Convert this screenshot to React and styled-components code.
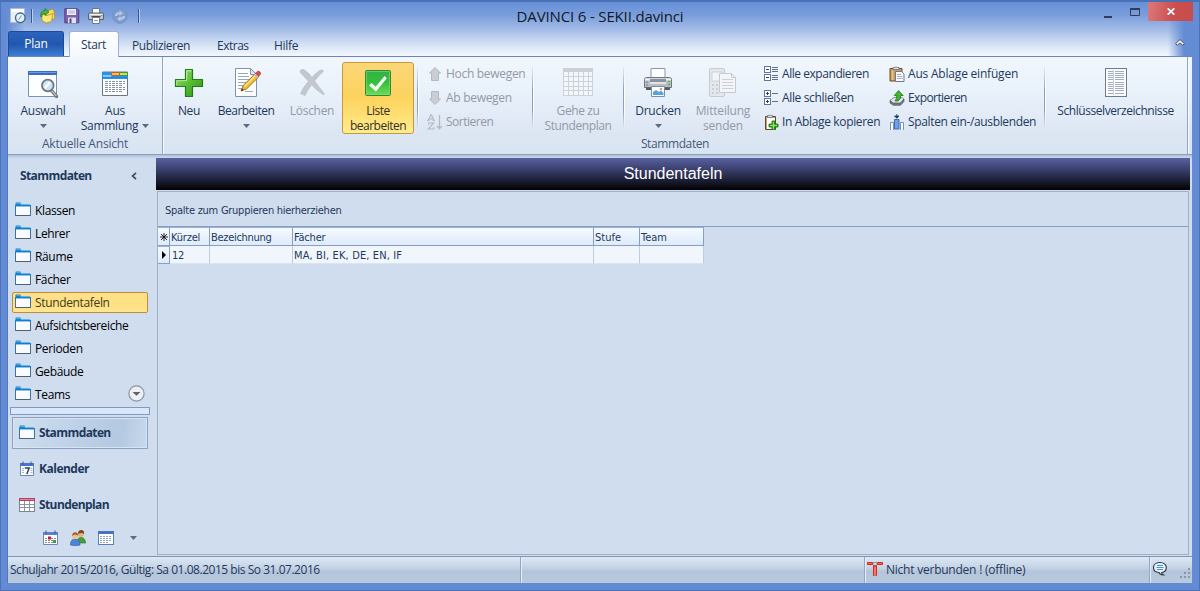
import React from "react";
import styled, { createGlobalStyle } from "styled-components";

const ui = `"Open Sans", "Noto Sans", sans-serif`;
const grid = `"DejaVu Sans Condensed", "DejaVu Sans", sans-serif`;

const Global = createGlobalStyle`
  *, *::before, *::after { box-sizing: border-box; }
  html, body { margin: 0; height: 100%; overflow: hidden; }
  body { font: 12px/15px ${ui}; color: #1e395b; cursor: default; }
  svg { display: block; flex: none; }
`;

const T = styled.span`
  white-space: nowrap;
  letter-spacing: ${(p) => p.$ls ?? -0.3}px;
`;

const Window = styled.div`
  width: 1200px;
  height: 591px;
  display: flex;
  flex-direction: column;
  border: 1px solid #4c73b8;
  border-top: 2px solid #4870b4;
  background: #628bd4;
`;

const Chrome = styled.header`
  height: 54px;
  flex: none;
  display: flex;
  flex-direction: column;
  background:
    linear-gradient(90deg, #648cd5 5px, rgba(100, 140, 213, 0) 24px, rgba(100, 140, 213, 0) 1167px, #648cd5 1183px),
    linear-gradient(#6790d8 0, #7c9fdc 14px, #a5bde8 28px, #d3e0f4 42px, #f4f8fd 54px);
`;

const TitleRow = styled.div`
  display: grid;
  grid-template-columns: 420px 1fr 420px;
  height: 29px;
`;

const QuickBar = styled.div`
  display: flex;
  align-items: center;
  padding: 0 0 1px 9px;
`;

const QuickIcon = styled.div`
  width: 16px;
  height: 16px;
  margin-right: ${(p) => p.$gap ?? 8}px;
`;

const QuickSep = styled.i`
  width: 2px;
  height: 14px;
  margin-right: ${(p) => p.$gap}px;
  background: linear-gradient(90deg, #3c5889 50%, #b9cdf0 50%);
`;

const WindowTitle = styled.div`
  text-align: center;
  padding-top: 4px;
  font-size: 15px;
  line-height: 20px;
  color: #111827;
`;

const Controls = styled.div`
  display: flex;
  justify-content: flex-end;
  align-items: flex-start;
  padding-right: 6px;
`;

const Control = styled.div`
  width: ${(p) => p.$w}px;
  height: 19px;
  display: flex;
  align-items: center;
  justify-content: center;
  background: ${(p) => (p.$close ? "linear-gradient(100deg, #db7a7c, #cc4f50 55%, #c94c4c)" : "none")};
`;

const TabRow = styled.nav`
  display: flex;
  height: 25px;
  padding-left: 7px;
`;

const PlanTab = styled.div`
  width: 56px;
  height: 25px;
  border: 1px solid #1c4a9b;
  border-bottom: 0;
  border-radius: 3px 3px 0 0;
  background: linear-gradient(#2d63bd, #2257ae 50%, #3b7ed4);
  color: #fff;
  text-align: center;
  line-height: 24px;
`;

const StartTab = styled.div`
  width: 50px;
  height: 26px;
  margin: 0 13px 0 5px;
  padding-right: 1px;
  position: relative;
  z-index: 1;
  border: 1px solid #9eb3d3;
  border-bottom: 0;
  border-radius: 3px 3px 0 0;
  background: linear-gradient(#ffffff, #f3f8fd);
  text-align: center;
  line-height: 26px;
`;

const Tab = styled.div`
  width: ${(p) => p.$w}px;
  line-height: 29px;
`;

const Collapse = styled.div`
  margin-left: auto;
  width: 24px;
  padding-top: 8px;
`;

const Client = styled.div`
  flex: 1;
  min-height: 0;
  display: flex;
  flex-direction: column;
  margin: 0 7px 7px 6px;
  border-left: 1px solid #4f78c0;
  border-right: 0;
  background: #cfddee;
`;

const Ribbon = styled.section`
  height: 99px;
  flex: none;
  display: flex;
  border-top: 1px solid #6b87b3;
  border-bottom: 1px solid #8a9fbc;
  background: linear-gradient(#f2f7fd, #e9f1fa 35%, #dce6f3 80%, #d9e4f2);
`;

const Group = styled.div`
  width: ${(p) => p.$w}px;
  padding-top: 5px;
  border-right: 1px solid #92a6c3;
  box-shadow: 1px 0 #f6faff;
`;

const GroupBody = styled.div`
  display: flex;
  height: 72px;
  > * { flex: none; }
`;

const Caption = styled.div`
  padding-top: 2px;
  text-align: center;
  color: #45597a;
  line-height: 16px;
`;

const Big = styled.div`
  width: ${(p) => p.$w}px;
  height: 72px;
  margin-left: ${(p) => p.$ml ?? 0}px;
  padding-top: ${(p) => (p.$on ? 4 : 5)}px;
  display: flex;
  flex-direction: column;
  align-items: center;
  text-align: center;
  color: ${(p) => (p.$off ? "#939aa6" : p.$on ? "#33311f" : "#1e395b")};
  ${(p) => p.$on && `
    border: 1px solid #c59a3c;
    border-radius: 3px;
    background: linear-gradient(#fbd678, #fdd35d 50%, #ffe27a 80%, #ffec92);
  `}
  > svg { margin-bottom: 4px; }
`;

const Line = styled.div`
  display: flex;
  justify-content: center;
  align-items: center;
  gap: 4px;
  height: 15px;
`;

const Sep = styled.i`
  width: 2px;
  height: 64px;
  margin: 3px -1px 0 ${(p) => p.$ml ?? 0}px;
  background: linear-gradient(90deg, rgba(140, 160, 190, 1) 50%, #fff 50%);
  mask-image: linear-gradient(transparent, #000 40%, #000 70%, transparent);
`;

const SmallCol = styled.div`
  width: ${(p) => p.$w}px;
  padding-left: ${(p) => p.$pl ?? 0}px;
`;

const Small = styled.div`
  height: 24px;
  display: flex;
  align-items: center;
  gap: 3px;
  color: ${(p) => (p.$off ? "#939aa6" : "#1e395b")};
  > span { padding-bottom: 2px; }
`;

const Main = styled.div`
  flex: 1;
  min-height: 0;
  display: flex;
  padding: 3px 2px 0 0;
  background: linear-gradient(#afc0d7 0, #c9d8eb 3px, #cfddee 4px);
`;

const Sidebar = styled.aside`
  width: 148px;
  display: flex;
  flex-direction: column;
`;

const SideHead = styled.div`
  height: 42px;
  padding: 0 19px 7px 12px;
  display: flex;
  align-items: center;
  justify-content: space-between;
  font-weight: 700;
  color: #1e395b;
`;

const SideItem = styled.div`
  height: 21px;
  margin: 0 8px 2px 4px;
  padding: 0 2px;
  display: flex;
  align-items: center;
  gap: 4px;
  border: 1px solid ${(p) => (p.$on ? "#c48a3a" : "transparent")};
  border-radius: 2px;
  background: ${(p) => (p.$on ? "linear-gradient(#fde08b, #ffe183 60%, #ffe68f)" : "none")};
  color: ${(p) => (p.$on ? "#3e3a20" : "#000")};
  > svg:first-child { margin-top: -1px; }
  > svg:last-child:not(:first-child) { margin: -3px 0 0 auto; }
`;

const Splitter = styled.div`
  height: 8px;
  margin: 0 6px 2px 2px;
  border: 1px solid #8199bd;
  background: #d9e7fa;
`;

const Nav = styled.div`
  height: 32px;
  margin: 0 8px 4px 4px;
  padding-left: 6px;
  display: flex;
  align-items: center;
  gap: 4px;
  font-weight: 700;
  border: 1px solid ${(p) => (p.$on ? "#8ba2c1" : "transparent")};
  background: ${(p) => (p.$on ? "linear-gradient(100deg, #cfdff0, #b9cde4 60%, #b4c9e2 80%, #c9daed)" : "none")};
  box-shadow: ${(p) => (p.$on ? "inset 0 0 0 1px #d6e4f4" : "none")};
  > span { padding-bottom: 1px; }
`;

const NavIcons = styled.div`
  display: flex;
  align-items: center;
  gap: 12px;
  padding: 5px 0 0 34px;
  > svg:last-child { margin-left: 4px; }
`;

const Content = styled.main`
  flex: 1;
  display: flex;
  flex-direction: column;
`;

const Banner = styled.h1`
  margin: 0;
  height: 32px;
  background: linear-gradient(#5961a0, #3f4576 30%, #171a2c 75%, #000);
  color: #fff;
  text-align: center;
  font: 400 16px/32px "Liberation Sans", Arial, sans-serif;
  letter-spacing: 0;
`;

const Panel = styled.div`
  flex: 1;
  margin: 1px 1px 1px;
  border: 1px solid #9eb0ca;
  font: 11px/17px ${grid};
`;

const GroupBy = styled.div`
  height: 35px;
  padding: 1px 0 0 7px;
  line-height: 36px;
  border-bottom: 1px solid #869fc2;
`;

const Table = styled.div`
  display: grid;
  grid-template-columns: 12px 40px 83px 301px 46px 64px;
  grid-template-rows: 19px 18px;
  width: 546px;
`;

const HeadCell = styled.div`
  padding-left: 1px;
  line-height: 19px;
  border-right: 1px solid #869fc2;
  border-bottom: 1px solid #869fc2;
  border-top: 1px solid #9db2cf;
  background: linear-gradient(#f4f9ff, #dfebfa);
`;

const Cell = styled.div`
  padding-left: ${(p) => p.$pl ?? 1}px;
  line-height: 19px;
  border-right: 1px solid #bccde2;
  border-bottom: 1px solid #dbe5f2;
  background: #f1f6fc;
`;

const Mark = styled(HeadCell)`
  display: flex;
  align-items: center;
  justify-content: center;
  padding: 0;
`;

const Status = styled.footer`
  height: 27px;
  flex: none;
  display: flex;
  border-top: 1px solid #8095b4;
  background: linear-gradient(#dce8f5, #c3d1e3 45%, #b4c4da 55%, #b9c9de);
`;

const StatusCell = styled.div`
  width: ${(p) => p.$w}px;
  display: flex;
  align-items: center;
  gap: 3px;
  padding-left: 2px;
  border-right: ${(p) => (p.$last ? "0" : "1px solid #93a7c3")};
  box-shadow: ${(p) => (p.$last ? "none" : "1px 0 #e4edf8")};
  justify-content: ${(p) => (p.$last ? "space-between" : "flex-start")};
  > span { padding-bottom: 2px; }
  > svg { margin-bottom: 2px; }
  > svg:nth-child(2) { margin: 8px 0 0; }
`;

const Down = ({ c = "#5b6b80" }) => (
  <svg width="7" height="4" viewBox="0 0 7 4"><path d="M0 0h7L3.500 4z" fill={c} /></svg>
);

const Folder = () => (
  <svg width="16" height="16" viewBox="0 0 16 16">
    <path d="M.5 2.500V1q0-.6.7-.6h4l1.200 1.800H15v1.600H.5z" fill="#1583cf" />
    <path d="M1.500 1.400h3.600l.8 1.100H15" fill="none" stroke="#6fc5f5" strokeWidth=".7" />
    <path d="M.5 3.800h15v9.700H.5z" fill="#f8fbff" stroke="#3a73a5" />
    <path d="M0 3h16v1.200H0z" fill="#0e7fd2" />
    <path d="M.3 13.500h15.400" stroke="#4e5f76" />
  </svg>
);

const WindowFind = () => (
  <svg width="32" height="32" viewBox="0 0 32 32">
    <path d="M1.500 4.500h28v25h-28z" fill="#fdfeff" stroke="#7c92b5" />
    <path d="M1 4h29v4H1z" fill="#3a6cc4" /><path d="M2 5h27v1H2z" fill="#6f9ae0" />
    <path d="M24.500 23.500l5 6" stroke="#6d7178" strokeWidth="3.400" strokeLinecap="round" />
    <path d="M24.700 23.700l4.600 5.400" stroke="#c3c6cc" strokeWidth="1.300" />
    <circle cx="20.800" cy="18.500" r="5.800" fill="#cfe3f6" stroke="#6d7580" strokeWidth="1.800" />
    <path d="M18 21l5-6" stroke="#fff" strokeWidth="2" />
  </svg>
);

const Collection = () => (
  <svg width="32" height="32" viewBox="0 0 32 32">
    <path d="M3.500 5h25v23.500h-25z" fill="#fff" stroke="#667890" />
    <path d="M3 7q0-2 2-2h7v4h17v3H3z" fill="#2b92ea" /><path d="M4 8h8v3H4z" fill="#7cc9ff" />
    <path d="M12.500 5.500h8v3h-8z" fill="#ffb765" stroke="#c0601f" />
    <path d="M20.500 5.500h8v3h-8z" fill="#b8e67c" stroke="#57912d" />
    <path d="M3 10.500h26" stroke="#2b84d5" />
    <g stroke="#8893a5" strokeDasharray="3 1 2 1"><path d="M6 14.500h20M6 16.500h20M6 18.500h18M6 20.500h20M6 22.500h20M6 24.500h17" /></g>
  </svg>
);

const Plus = () => (
  <svg width="32" height="32" viewBox="0 0 32 32">
    <defs><linearGradient id="pg" x1="0" y1="0" x2="1" y2="1"><stop offset="0" stopColor="#9be36d" /><stop offset=".5" stopColor="#58bd34" /><stop offset="1" stopColor="#2d9317" /></linearGradient></defs>
    <path d="M12.500 2.500h7v10h10v7h-10v10h-7v-10h-10v-7h10z" fill="url(#pg)" stroke="#257c16" strokeWidth="1.200" strokeLinejoin="round" />
    <path d="M13.700 13.700V3.800h4.600" fill="none" stroke="#c6f0ab" />
    <path d="M3.700 18v-4.300h10" fill="none" stroke="#b2e895" />
  </svg>
);

const EditDoc = () => (
  <svg width="32" height="32" viewBox="0 0 32 32">
    <path d="M5.500 1.500h15l6 6v22h-21z" fill="#fdfeff" stroke="#8192ae" />
    <path d="M20.500 1.500v6h6z" fill="#dbe5f3" stroke="#8192ae" />
    <g stroke="#9aa6ba"><path d="M8 6.500h10M8 9.500h11M8 12.500h12M8 15.500h11M8 18.500h7M8 21.500h5M15 24.500h8" /></g>
    <path d="M11 24l2.200-5.500L25.500 6.300l3.400 3.400L16.500 22z" fill="#f2bd35" stroke="#946a18" strokeWidth=".9" />
    <path d="M14.500 19.500l12-12" stroke="#ffe58c" strokeWidth="1.300" />
    <path d="M25.200 6.600l2-2q1.300-1 2.600.2t.5 2.600l-1.900 1.900z" fill="#e14b43" stroke="#95322c" strokeWidth=".6" />
    <path d="M24 7.800l1.300-1.300 3.200 3.200-1.300 1.300z" fill="#b7c1cf" />
    <path d="M11 24l1-2.600 1.700 1.700z" fill="#303030" />
  </svg>
);

const Cross = () => (
  <svg width="32" height="32" viewBox="0 0 32 32" fill="#c3c8cf" stroke="#b9bec7" strokeWidth=".8" strokeLinejoin="round">
    <path d="M4 5q0-2.500 2.800-2.500Q10 3 16 10.500 21 4.500 25.500 2.800l2 1.200Q22 9 18.500 14q4.500 6 9.800 13l-.9.700Q21 23.500 15.500 17.800 11 23.500 9 28.500L4.500 26.500Q7.500 20 12.500 14.300 7.500 9 4 5z" />
  </svg>
);

const Check = () => (
  <svg width="32" height="32" viewBox="0 0 32 32">
    <defs><linearGradient id="cg" x1="0" y1="0" x2="0" y2="1"><stop offset="0" stopColor="#35b045" /><stop offset=".5" stopColor="#35c03c" /><stop offset="1" stopColor="#71da59" /></linearGradient></defs>
    <rect x="3.500" y="3.500" width="25" height="25" rx="1" fill="url(#cg)" stroke="#2f8a34" />
    <path d="M4.500 27.500v-23h23v23z" fill="none" stroke="#7fe07c" strokeOpacity=".6" />
    <path d="M7 18.500l2.600-2.600 4 3.800L22.600 9l2.200 2.300L14 24.500z" fill="#f4fbf4" />
  </svg>
);

const MoveArrow = ({ down }) => (
  <svg width="16" height="16" viewBox="0 0 16 16">
    <path transform={down ? "rotate(180 8 8)" : undefined} d="M8 1.500l5.500 5.500h-2v7.500h-7V7h-2z" fill="#c9cdd4" stroke="#b4b9c2" strokeLinejoin="round" />
  </svg>
);

const Sort = () => (
  <svg width="16" height="16" viewBox="0 0 16 16" fill="none" stroke="#b4bac4">
    <path d="M1 6.500L3.800.8h.6L7 6.500M2 4.800h4M.2 6.500h2.200M5.600 6.500h2.200" strokeWidth="1.200" />
    <path d="M1.500 10.500V9h5L1.300 15h5.600v-1.700" strokeWidth="1.200" />
    <path d="M12.500 1v13.500M10 12l2.500 2.700L15 12" strokeWidth="1.300" />
  </svg>
);

const Timetable = () => (
  <svg width="32" height="32" viewBox="0 0 32 32" shapeRendering="crispEdges">
    <path d="M1.500 1.500h29v27h-29z" fill="#f3f6fa" stroke="#ccd2da" />
    <path d="M1 1h30v4H1z" fill="#cbd0d8" />
    <path d="M6.500 5v23M11.500 5v23M16.500 5v23M21.500 5v23M26.500 5v23M2 9.500h29M2 14.500h29M2 19.500h29M2 23.500h29" stroke="#ccd2da" />
  </svg>
);

const Printer = ({ size = 32 }) => (
  <svg width={size} height={size} viewBox="0 0 32 32">
    <path d="M9 1.500h14V12H9z" fill="#fcfdff" stroke="#8c97a8" />
    <path d="M2.500 12.500q0-2 2-2h23q2 0 2 2v8h-27z" fill="#b9bec6" stroke="#6f7680" />
    <path d="M3 12.500h26" stroke="#eef0f3" strokeWidth="2" />
    <path d="M4 20.500h24v2.500H4z" fill="#555b64" />
    <path d="M8 12h16v4H8z" fill="#8b929d" /><path d="M8 15h16v2H8z" fill="#e1e4e8" />
    <path d="M9.500 19.500h13v10h-13z" fill="#fff" stroke="#7c8da8" />
    <path d="M11 28v-3l3-2 3 2 2-1.500 2.500 2.500v2z" fill="#56a3e0" /><circle cx="19" cy="22" r="1.300" fill="#e7a04a" />
    <path d="M26 14.500h2M26 17.500h2" stroke="#53bb3c" strokeWidth="1.400" />
    <path d="M4 15h2M4 18h2" stroke="#787f8a" />
  </svg>
);

const Message = () => (
  <svg width="32" height="32" viewBox="0 0 32 32">
    <rect x="2.500" y="1.500" width="15" height="28" rx="1.500" fill="#e4e7ec" stroke="#c6cbd2" />
    <path d="M5 5h10v9H5z" fill="#f3f5f8" stroke="#cdd1d8" />
    <g fill="#c9cdd5"><path d="M5 17h2v2H5zM9 17h2v2H9zM5 21h2v2H5zM9 21h2v2H9zM5 25h2v2H5zM9 25h2v2H9z" /></g>
    <path d="M12.500 6.500h12l4 4v15h-16z" fill="#f3f5f9" stroke="#c5cad2" /><path d="M24.500 6.500v4h4" fill="none" stroke="#c5cad2" />
    <path d="M15 12.500h11M15 15.500h11M15 18.500h11M15 21.500h11" stroke="#cbd0d8" />
  </svg>
);

const Expand = ({ open }) => (
  <svg width="16" height="16" viewBox="0 0 16 16" fill="none" shapeRendering="crispEdges">
    <path d="M1.500 .5h6v6h-6zM1.500 8.500h6v6h-6z" fill="#fff" stroke="#66758d" />
    <path d={open ? "M3 3.500h3M3 11.500h3" : "M3 3.500h3M3 11.500h3M4.500 2v3M4.500 10v3"} stroke="#1f3d74" />
    <path d={open ? "M9 1.500h6M9 3.500h6M9 5.500h6M9 9.500h6M9 11.500h6M9 13.500h6" : "M9 3.500h6M9 11.500h6"} stroke="#5f7090" />
  </svg>
);

const ClipCopy = () => (
  <svg width="16" height="16" viewBox="0 0 16 16">
    <path d="M2.500 2.500h10v13h-10z" fill="#fbfdff" stroke="#614a2b" /><path d="M3.500 15V3.500H12" fill="none" stroke="#c8a26a" />
    <path d="M4.500 3.500v-2h1.700q.8-1.200 1.600 0h1.700v2z" fill="#d9dde4" stroke="#6a7280" strokeWidth=".8" />
    <path d="M9 7h3v3h3v3h-3v3H9v-3H6v-3h3z" fill="#3dae26" stroke="#176a10" strokeWidth=".8" />
    <path d="M10.500 8v7M7 11.500h7" stroke="#8ee06c" />
  </svg>
);

const ClipPaste = () => (
  <svg width="16" height="16" viewBox="0 0 16 16">
    <path d="M1 2.500h12v12.500H1z" fill="#c89b55" stroke="#6b4f2b" /><path d="M2.500 4h2v10h-2z" fill="#e3c184" />
    <path d="M4 3.500v-2h2q1-1.400 2 0h2v2z" fill="#dfe3e9" stroke="#6a7280" strokeWidth=".8" />
    <path d="M6.500 5.500h6l2.500 2.500v7.500H6.500z" fill="#f9fbfe" stroke="#707a89" />
    <path d="M8 8.500h4M8 10.500h5.500M8 12.500h5.500" stroke="#a3aebf" />
  </svg>
);

const Export = () => (
  <svg width="16" height="16" viewBox="0 0 16 16">
    <path d="M1 10.500L5 7.500h8l2 1.500-3.500 4.500H4z" fill="#dfe4ea" stroke="#767e8a" strokeWidth=".8" />
    <path d="M1 10.500l3 2.500h7.500L15 9v2.500l-3.500 3.800H4.200L1 13z" fill="#707883" stroke="#474f59" strokeWidth=".6" />
    <path d="M9.500.6l4.700 4.900h-2.400q.2 3.600-2.800 5.500H6q2-2.200 1.800-5.500H5.300z" fill="#46b52e" stroke="#1d7716" strokeWidth=".8" />
  </svg>
);

const Columns = () => (
  <svg width="16" height="16" viewBox="0 0 16 16">
    <path d="M1.500 16V8.500h3V16M11.500 16V8.500h3V16" fill="#f7faff" stroke="#7f91ae" />
    <path d="M5.500 5.500h4.500v9.500H5.500z" fill="#6ea1ea" stroke="#376cbb" />
    <path d="M7.800 0v4M5.500 2l2.300 2.300L10 2z" stroke="#263950" fill="#263950" strokeWidth=".8" />
  </svg>
);

const KeyList = () => (
  <svg width="32" height="32" viewBox="0 0 32 32" shapeRendering="crispEdges">
    <path d="M5.500 1.500h21v28h-21z" fill="#fcfdff" stroke="#6d7b92" />
    <path d="M13.500 3v25" stroke="#c3ccdc" />
    {[4.5, 6.5, 8.5, 10.5, 12.5, 15.5, 17.5, 19.5, 21.5, 23.5, 26.5].map((y) => (
      <path key={y} d={`M8 ${y}h5M15 ${y}h9`} stroke="#a3adc2" />
    ))}
  </svg>
);

const AppIcon = () => (
  <svg width="16" height="16" viewBox="0 0 16 16">
    <path d="M.5 .5h14v14H.5z" fill="#e7f0f8" stroke="#a9bdd2" /><path d="M1 1h13v3H1z" fill="#fff" />
    <circle cx="10.300" cy="9.800" r="4.800" fill="#e4f2fb" stroke="#486785" strokeWidth="1.400" />
    <path d="M8.500 12l3-4.500" stroke="#6a8fb0" />
  </svg>
);

const OpenIcon = () => (
  <svg width="16" height="16" viewBox="0 0 16 16">
    <path d="M5 3.500L13.500 1l1.500 9-8 4.500z" fill="#f6de63" stroke="#b28f24" strokeWidth=".8" />
    <path d="M2 6l5 1.500 6-2-1.500 8L6 15l-4-2.500z" fill="#fbe878" stroke="#b28f24" strokeWidth=".8" />
    <path d="M1 9Q-.5 3 5 2.500V.5L9 4 5 7.500V5.300Q2.500 5 1 9z" fill="#48b833" stroke="#1f7c1a" strokeWidth=".7" />
  </svg>
);

const SaveIcon = () => (
  <svg width="16" height="16" viewBox="0 0 16 16">
    <path d="M.8.800h12.500l1.500 1.500v12.500H.8z" fill="#7d5fae" stroke="#58408a" />
    <path d="M3 1h9v6H3z" fill="#f4f6fb" /><path d="M4 3h7M4 5h7" stroke="#a3acc0" />
    <path d="M4 9.500h8V15H4z" fill="#e2e2ef" /><path d="M5.500 10.500h2V15h-2z" fill="#58408a" />
  </svg>
);

const SmallPrinter = () => (
  <svg width="16" height="16" viewBox="0 0 16 16">
    <path d="M4.500 .5h7v5h-7z" fill="#fdfdff" stroke="#6f7884" />
    <path d="M.5 6q0-1 1-1h13q1 0 1 1v5.500H.5z" fill="#c2c6cc" stroke="#5d646e" />
    <path d="M1.500 6.500h13" stroke="#eef0f3" />
    <path d="M3.500 8.500h9" stroke="#444b55" />
    <path d="M4.500 9.500h7v6h-7z" fill="#fff" stroke="#6f7884" />
    <path d="M6 12.500h4" stroke="#6aa5dd" /><path d="M13 7.500h1.500" stroke="#4ab535" />
  </svg>
);

const SyncIcon = () => (
  <svg width="16" height="16" viewBox="0 0 16 16">
    <circle cx="8" cy="8" r="7.300" fill="#7d9bcd" stroke="#7291c7" />
    <path d="M3 8q0-3.500 4.500-3.800V2.600l3.500 2.600-3.500 2.500V6.300Q5.500 6.300 5 8zM13 8q0 3.500-4.500 3.800v1.600L5 10.800l3.500-2.500v1.400q2 0 2.500-1.700z" fill="#b6cae8" />
  </svg>
);

const CalendarIcon = () => (
  <svg width="16" height="16" viewBox="0 0 16 16">
    <path d="M1.500 2.500h13v12h-13z" fill="#fff" stroke="#6e89b8" /><path d="M1 2h14v3H1z" fill="#4777cb" />
    <path d="M4 .5v3M12 .5v3" stroke="#3a578f" /><path d="M3 7.500h2M3 9.500h2M3 11.500h2M11.500 7.500h2M11.500 9.500h2M11.500 11.500h2" stroke="#a7b5cc" />
    <path d="M5.800 7h4.400l-2.400 6" fill="none" stroke="#2d4470" strokeWidth="1.500" />
  </svg>
);

const PlanIcon = () => (
  <svg width="16" height="16" viewBox="0 0 16 16" shapeRendering="crispEdges">
    <path d="M.5 1.500h15v13H.5z" fill="#fff" stroke="#7b8494" /><path d="M0 1h16v3H0z" fill="#b83b60" /><path d="M1 2h14v1H1z" fill="#e08ba3" />
    <path d="M5.500 4v10M10.500 4v10M1 7.500h14M1 10.500h14" stroke="#8b94a4" />
  </svg>
);

const DayIcon = () => (
  <svg width="16" height="16" viewBox="0 0 16 16">
    <path d="M1.500 2.500h14v12h-14z" fill="#fff" stroke="#6e89b8" /><path d="M1 2h15v3H1z" fill="#5a83cf" />
    <path d="M4 .5v3M13 .5v3" stroke="#3a578f" />
    <path d="M3 8.500h11M3 10.500h11M3 12.500h8" stroke="#8790a3" strokeDasharray="2 1" />
    <path d="M6 6.500h3v3H6z" fill="#c3202c" /><path d="M11 10h3v3h-3z" fill="#3e9d3e" />
  </svg>
);

const People = () => (
  <svg width="16" height="16" viewBox="0 0 16 16">
    <path d="M7 13q0-5.500 4-5.500t4.700 5.500z" fill="#45a135" stroke="#2a7425" strokeWidth=".6" />
    <circle cx="11" cy="4" r="3" fill="#e8b27c" /><path d="M8 4q0-4 3.200-4t3 4Q12 1.800 8 4z" fill="#7b4b20" />
    <path d="M.4 15q0-6 4.800-6t4.900 6q-4.800 1.400-9.700 0z" fill="#4f83d8" stroke="#2e5cab" strokeWidth=".6" />
    <circle cx="5.200" cy="6.200" r="2.900" fill="#f2c18d" /><path d="M2.200 6q0-3.700 3-3.700t3 3.700q-2.500-2.300-6 0z" fill="#a0662c" />
  </svg>
);

const ListIcon = () => (
  <svg width="16" height="16" viewBox="0 0 16 16" shapeRendering="crispEdges">
    <path d="M.5 1.500h15v13H.5z" fill="#fff" stroke="#5d7fb9" /><path d="M0 1h16v3H0z" fill="#4674c3" />
    <path d="M2 6.500h12M2 8.500h12M2 10.500h12M2 12.500h9" stroke="#8ea2c6" strokeDasharray="2 1" />
  </svg>
);

const Round = () => (
  <svg width="17" height="17" viewBox="0 0 17 17">
    <circle cx="8.500" cy="8.500" r="7.600" fill="#edf1f5" stroke="#8d949f" strokeWidth="1.200" /><path d="M4.500 7h8l-4 3.800z" fill="#596473" />
  </svg>
);

const Offline = () => (
  <svg width="16" height="16" viewBox="0 0 16 16">
    <path d="M.5 1.500h5v2h-5zM10.500 1.500h5v2h-5z" fill="#f26b55" stroke="#d3271d" />
    <path d="M6.500 4.500h3v10h-3z" fill="#e2412f" stroke="#d3271d" /><path d="M8 6v9" stroke="#f1b6a8" />
    <path d="M5.500 1.500h5L8 5z" fill="#e7e9ed" stroke="#84766f" strokeWidth=".7" />
  </svg>
);

const Bubble = () => (
  <svg width="16" height="16" viewBox="0 0 16 16">
    <path d="M8 1.500c3.800 0 6.300 2 6.300 5s-2 4.700-4.700 5q.2 1.500 1.600 2.300Q7.800 13.800 7 11.500C3.600 11.300 1.500 9.500 1.500 6.500S4.200 1.500 8 1.500z" fill="#eaf2fb" stroke="#333e4e" strokeWidth="1.200" />
    <path d="M5 4.500h6M4.500 6.500h7M5 8.500h6" stroke="#4595cf" />
  </svg>
);

const Grip = () => (
  <svg width="12" height="12" viewBox="0 0 12 12" fill="#8496b0">
    <path d="M8 0h2v2H8zM4 4h2v2H4zM8 4h2v2H8zM0 8h2v2H0zM4 8h2v2H4zM8 8h2v2H8z" />
  </svg>
);

const sideItems = ["Klassen", "Lehrer", "Räume", "Fächer", "Stundentafeln", "Aufsichtsbereiche", "Perioden", "Gebäude", "Teams"];

function BigButton({ icon, lines, arrow, ls, ...rest }) {
  return (
    <Big {...rest}>
      {icon}
      {lines.map((l, i) => (
        <Line key={l}>
          <T $ls={ls}>{l}</T>
          {arrow === "side" && i === 1 && <Down />}
        </Line>
      ))}
      {arrow === "below" && <Line><Down /></Line>}
    </Big>
  );
}

function SmallButton({ icon, text, ls, ...rest }) {
  return <Small {...rest}>{icon}<T $ls={ls}>{text}</T></Small>;
}

export default function App() {
  return (
    <>
      <Global />
      <Window>
        <Chrome>
          <TitleRow>
            <QuickBar>
              <QuickIcon $gap={5}><AppIcon /></QuickIcon>
              <QuickSep $gap={7} />
              <QuickIcon><OpenIcon /></QuickIcon>
              <QuickIcon><SaveIcon /></QuickIcon>
              <QuickIcon><SmallPrinter /></QuickIcon>
              <QuickIcon $gap={10}><SyncIcon /></QuickIcon>
              <QuickSep $gap={0} />
            </QuickBar>
            <WindowTitle><T $ls={-0.15}>DAVINCI 6 - SEKII.davinci</T></WindowTitle>
            <Controls>
              <Control $w={27}><svg width="8" height="14" viewBox="0 0 8 14"><path d="M0 11h8v2H0z" fill="#303c51" /></svg></Control>
              <Control $w={27}><svg width="10" height="8" viewBox="0 0 10 8"><path d="M.5 1h9v6.500h-9z" fill="none" stroke="#303c51" /><path d="M0 0h10v2H0z" fill="#303c51" /></svg></Control>
              <Control $w={45} $close><svg width="8" height="7" viewBox="0 0 8 7"><path d="M.7.300l6.600 6.400M7.300.300L.7 6.700" stroke="#fff" strokeWidth="1.700" /></svg></Control>
            </Controls>
          </TitleRow>
          <TabRow>
            <PlanTab><T $ls={-0.2}>Plan</T></PlanTab>
            <StartTab><T>Start</T></StartTab>
            <Tab $w={85}><T $ls={-0.4}>Publizieren</T></Tab>
            <Tab $w={57}><T $ls={-0.5}>Extras</T></Tab>
            <Tab $w={60}><T>Hilfe</T></Tab>
            <Collapse>
              <svg width="10" height="7" viewBox="0 0 10 7"><path d="M5 .6L9.300 4.500 7.800 6.300 5 3.900 2.200 6.300.7 4.500z" fill="#fff" stroke="#3b4d68" /></svg>
            </Collapse>
          </TabRow>
        </Chrome>
        <Client>
          <Ribbon>
            <Group $w={155}>
              <GroupBody>
                <BigButton $w={70} icon={<WindowFind />} lines={["Auswahl"]} arrow="below" />
                <BigButton $w={74} icon={<Collection />} lines={["Aus", "Sammlung"]} arrow="side" />
              </GroupBody>
              <Caption><T $ls={-0.2}>Aktuelle Ansicht</T></Caption>
            </Group>
            <Group $w={1025}>
              <GroupBody>
                <BigButton $w={52} icon={<Plus />} lines={["Neu"]} />
                <BigButton $w={62} ls={-0.5} icon={<EditDoc />} lines={["Bearbeiten"]} arrow="below" />
                <BigButton $w={60} $ml={5} $off icon={<Cross />} lines={["Löschen"]} />
                <BigButton $w={72} ls={-0.5} $on icon={<Check />} lines={["Liste", "bearbeiten"]} />
                <Sep $ml={3} />
                <SmallCol $w={114} $pl={9}>
                  <SmallButton $off icon={<MoveArrow />} text="Hoch bewegen" />
                  <SmallButton $off icon={<MoveArrow down />} text="Ab bewegen" />
                  <SmallButton $off ls={-0.5} icon={<Sort />} text="Sortieren" />
                </SmallCol>
                <Sep />
                <BigButton $w={90} ls={-0.4} $off icon={<Timetable />} lines={["Gehe zu", "Stundenplan"]} />
                <Sep />
                <BigButton $w={68} ls={-0.2} icon={<Printer />} lines={["Drucken"]} arrow="below" />
                <BigButton $w={62} ls={-0.2} $off icon={<Message />} lines={["Mitteilung", "senden"]} />
                <SmallCol $w={135} $pl={9}>
                  <SmallButton ls={-0.45} icon={<Expand open />} text="Alle expandieren" />
                  <SmallButton ls={-0.35} icon={<Expand />} text="Alle schließen" />
                  <SmallButton ls={-0.35} icon={<ClipCopy />} text="In Ablage kopieren" />
                </SmallCol>
                <SmallCol $w={155}>
                  <SmallButton ls={-0.2} icon={<ClipPaste />} text="Aus Ablage einfügen" />
                  <SmallButton ls={-0.6} icon={<Export />} text="Exportieren" />
                  <SmallButton ls={-0.35} icon={<Columns />} text="Spalten ein-/ausblenden" />
                </SmallCol>
                <Sep />
                <BigButton $w={141} ls={-0.43} icon={<KeyList />} lines={["Schlüsselverzeichnisse"]} />
              </GroupBody>
              <Caption><T $ls={-0.4}>Stammdaten</T></Caption>
            </Group>
          </Ribbon>
          <Main>
            <Sidebar>
              <SideHead>
                <T $ls={-0.6}>Stammdaten</T>
                <svg width="6" height="8" viewBox="0 0 6 8"><path d="M5 .8L1.500 4 5 7.200" fill="none" stroke="#3b4d68" strokeWidth="1.700" /></svg>
              </SideHead>
              {sideItems.map((s) => (
                <SideItem key={s} $on={s === "Stundentafeln"}>
                  <Folder /><T $ls={-0.35}>{s}</T>{s === "Teams" && <Round />}
                </SideItem>
              ))}
              <Splitter />
              <Nav $on><Folder /><T $ls={-0.6}>Stammdaten</T></Nav>
              <Nav><CalendarIcon /><T $ls={-0.5}>Kalender</T></Nav>
              <Nav><PlanIcon /><T $ls={-0.6}>Stundenplan</T></Nav>
              <NavIcons><DayIcon /><People /><ListIcon /><Down /></NavIcons>
            </Sidebar>
            <Content>
              <Banner>Stundentafeln</Banner>
              <Panel>
                <GroupBy><T $ls={-0.26}>Spalte zum Gruppieren hierherziehen</T></GroupBy>
                <Table>
                  <Mark><svg width="8" height="8" viewBox="0 0 8 8"><path d="M4 0v8M0 4h8M1 1l6 6M7 1L1 7" stroke="#111" strokeWidth=".9" /></svg></Mark>
                  <HeadCell><T $ls={-0.2}>Kürzel</T></HeadCell>
                  <HeadCell><T $ls={-0.3}>Bezeichnung</T></HeadCell>
                  <HeadCell><T $ls={-0.2}>Fächer</T></HeadCell>
                  <HeadCell><T $ls={0}>Stufe</T></HeadCell>
                  <HeadCell><T $ls={0}>Team</T></HeadCell>
                  <Mark><svg width="4" height="8" viewBox="0 0 4 8"><path d="M0 0l4 4-4 4z" fill="#000" /></svg></Mark>
                  <Cell $pl={2}><T $ls={-0.2}>12</T></Cell>
                  <Cell />
                  <Cell><T $ls={0.13}>MA, BI, EK, DE, EN, IF</T></Cell>
                  <Cell />
                  <Cell />
                </Table>
              </Panel>
            </Content>
          </Main>
          <Status>
            <StatusCell $w={513}><T $ls={-0.47}>Schuljahr 2015/2016, Gültig: Sa 01.08.2015 bis So 31.07.2016</T></StatusCell>
            <StatusCell $w={344} />
            <StatusCell $w={285}><Offline /><T $ls={-0.23}>Nicht verbunden ! (offline)</T></StatusCell>
            <StatusCell $w={42} $last><Bubble /><Grip /></StatusCell>
          </Status>
        </Client>
      </Window>
    </>
  );
}
